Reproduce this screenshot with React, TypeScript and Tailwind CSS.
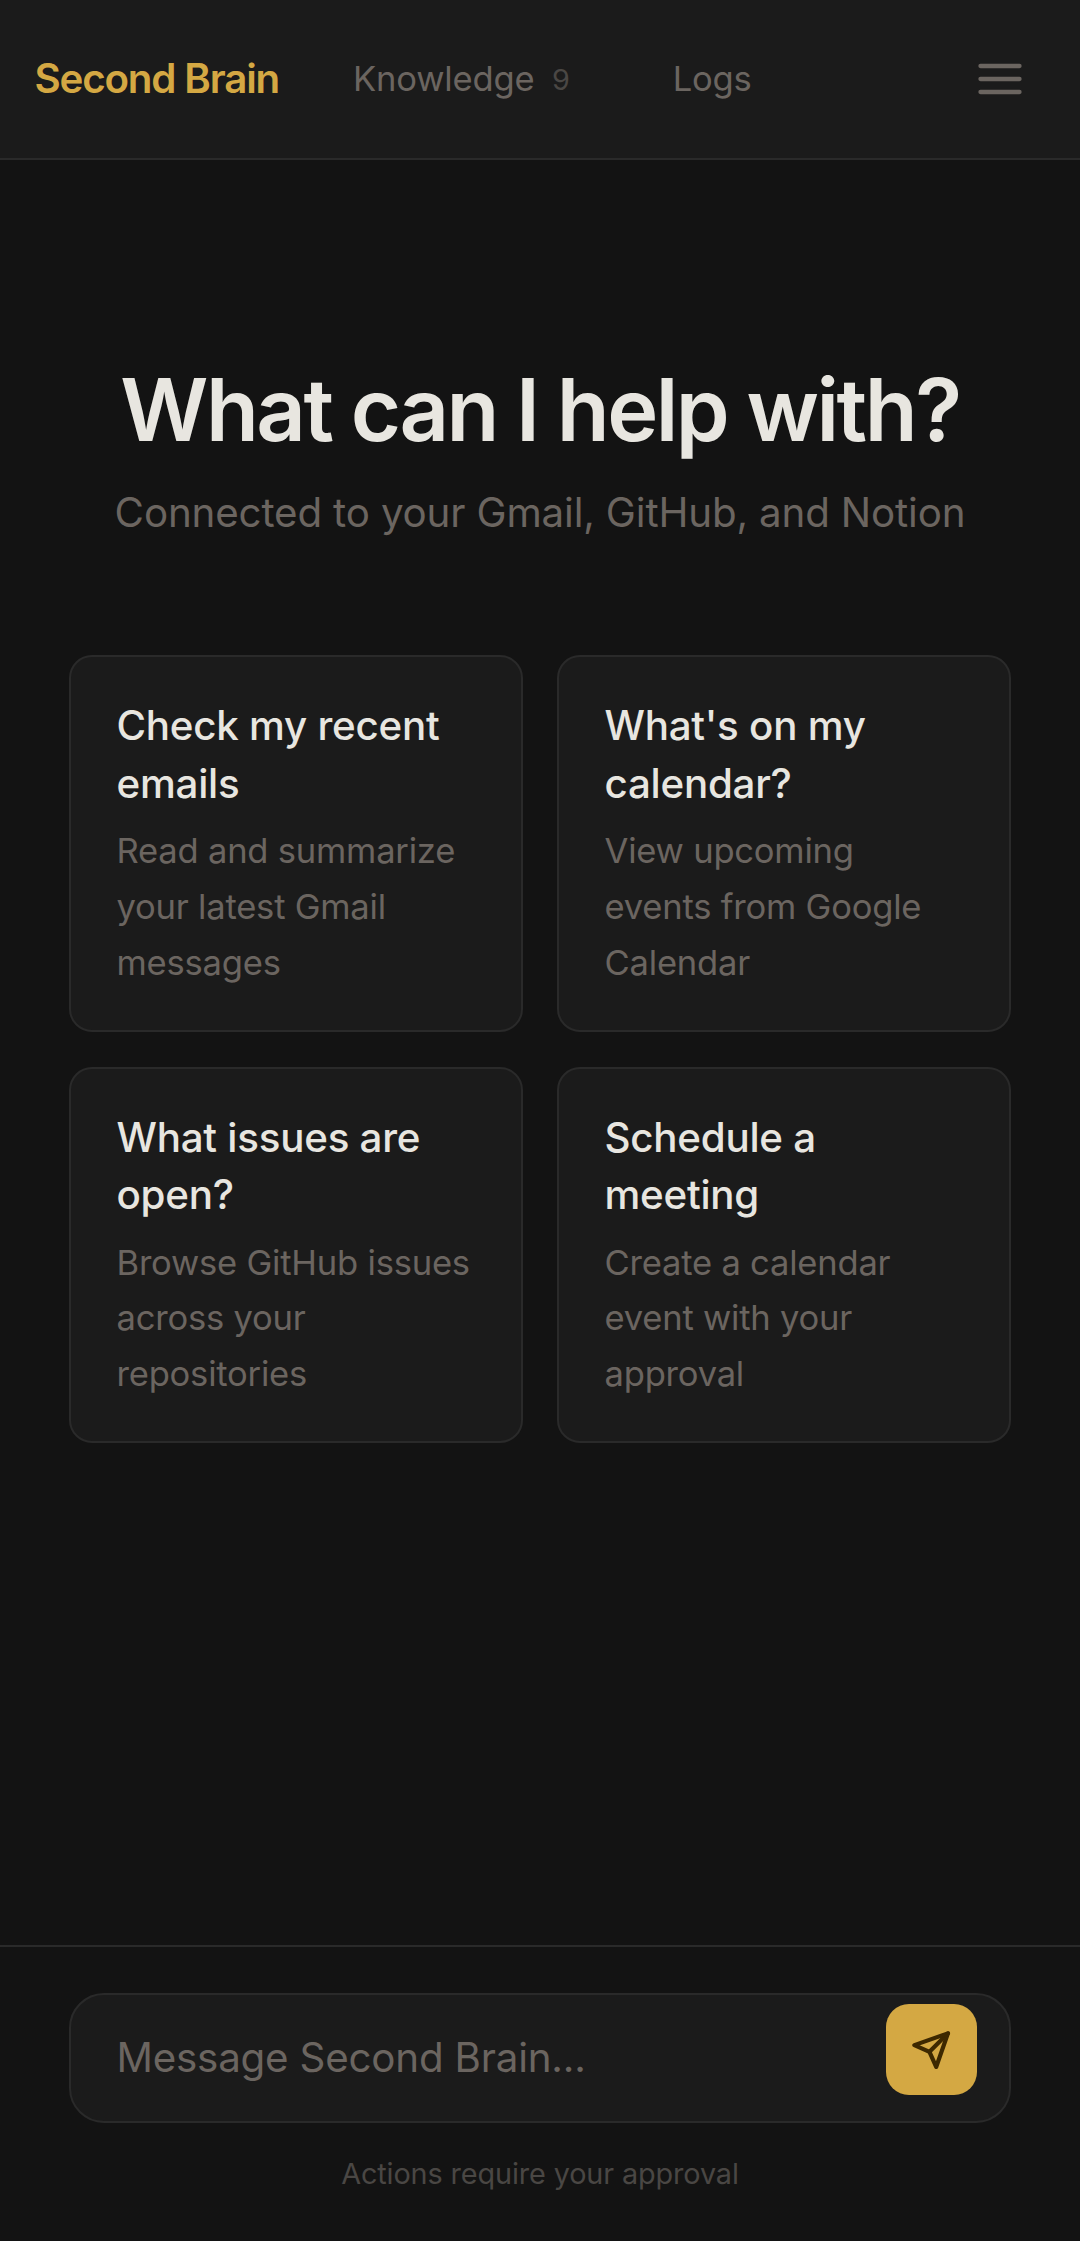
import { useState } from "react";

const suggestions = [
  { title: "Check my recent emails", description: "Read and summarize your latest Gmail messages" },
  { title: "What's on my calendar?", description: "View upcoming events from Google Calendar" },
  { title: "What issues are open?", description: "Browse GitHub issues across your repositories" },
  { title: "Schedule a meeting", description: "Create a calendar event with your approval" },
];

const MenuIcon = () => (
  <svg
    className="size-[52px]"
    viewBox="0 0 24 24"
    fill="none"
    stroke="currentColor"
    strokeWidth="2"
    strokeLinecap="round"
  >
    <line x1="3" y1="6" x2="21" y2="6" />
    <line x1="3" y1="12" x2="21" y2="12" />
    <line x1="3" y1="18" x2="21" y2="18" />
  </svg>
);

const SendIcon = () => (
  <svg
    className="size-[40.3px]"
    viewBox="0 0 24 24"
    fill="none"
    stroke="currentColor"
    strokeWidth="2.5"
    strokeLinecap="round"
    strokeLinejoin="round"
  >
    <line x1="22" y1="2" x2="11" y2="13" />
    <polygon points="22 2 15 22 11 13 2 9 22 2" />
  </svg>
);

const Header = () => (
  <header className="flex h-40 shrink-0 items-center border-b-2 border-[#2a2a2a] bg-[#1b1b1b] pr-[54px] pl-[34.5px]">
    <span className="text-[40.3px] font-semibold tracking-[-0.029em] text-[#d4a843]">Second Brain</span>
    <nav className="ml-[74px] flex items-center text-[34.56px] tracking-[-0.005em] text-[#6b6560]">
      <a href="#knowledge" className="flex items-center">
        Knowledge
        <span className="ml-[17.5px] pt-0.5 text-[28.8px] text-[#4a4744]">9</span>
      </a>
      <a href="#logs" className="ml-[103px]">Logs</a>
    </nav>
    <button type="button" aria-label="Menu" className="ml-auto text-[#6b6560]">
      <MenuIcon />
    </button>
  </header>
);

const SuggestionCard = ({
  title,
  description,
  onSelect,
}: {
  title: string;
  description: string;
  onSelect: (title: string) => void;
}) => (
  <button
    type="button"
    onClick={() => onSelect(title)}
    className="flex h-[376.5px] flex-col rounded-[23px] border-2 border-[#2a2a2a] bg-[#1b1b1b] pt-[40px] pr-[40px] pl-[45.5px] text-left"
  >
    <span className="text-[40.32px] leading-[57.6px] font-medium tracking-[-0.006em] text-[#e8e6e0]">{title}</span>
    <span className="mt-[11px] text-[34.56px] leading-[55.7px] tracking-[-0.006em] text-[#6b6560]">
      {description}
    </span>
  </button>
);

const App = () => {
  const [message, setMessage] = useState("");

  return (
    <div className="flex h-[2241px] w-[1080px] flex-col bg-[#131313] font-['Inter',sans-serif]">
      <Header />

      <main className="flex flex-1 flex-col px-[69px] pt-[198px]">
        <h1 className="text-center text-[86.4px] leading-[104px] font-semibold tracking-[-0.029em] text-[#e8e6e0]">
          What can I help with?
        </h1>
        <p className="mt-[22px] text-center text-[40.32px] leading-[58px] tracking-[-0.004em] text-[#6b6560]">
          Connected to your Gmail, GitHub, and Notion
        </p>
        <div className="mt-[113px] grid grid-cols-2 gap-x-[34px] gap-y-[35px]">
          {suggestions.map((s) => (
            <SuggestionCard key={s.title} {...s} onSelect={setMessage} />
          ))}
        </div>
      </main>

      <footer className="h-[296px] shrink-0 border-t-2 border-[#2a2a2a] px-[69px] pt-[46px]">
        <form
          onSubmit={(e) => e.preventDefault()}
          className="flex h-[130px] items-start rounded-[35px] border-2 border-[#2a2a2a] bg-[#1b1b1b] pr-[32px] pl-[45.5px]"
        >
          <input
            value={message}
            onChange={(e) => setMessage(e.target.value)}
            placeholder="Message Second Brain..."
            className="h-[124px] flex-1 bg-transparent text-[40.32px] tracking-[-0.005em] text-[#e8e6e0] outline-none placeholder:text-[#6b6560]"
          />
          <button
            type="submit"
            aria-label="Send"
            className="mt-[9px] flex size-[91px] items-center justify-center rounded-[23px] bg-[#d4a843] pt-px text-[#3d2800]"
          >
            <SendIcon />
          </button>
        </form>
        <p className="mt-[29px] text-center text-[28.8px] leading-[43px] tracking-[-0.004em] text-[#4a4744]">
          Actions require your approval
        </p>
      </footer>
    </div>
  );
};

export default App;
